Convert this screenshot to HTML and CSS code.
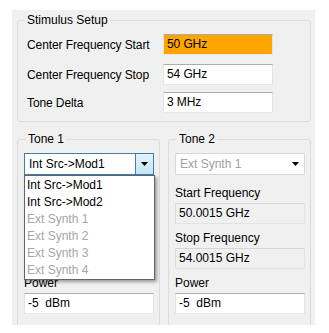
FILE: index.html
```html
<!DOCTYPE html>
<html>
<head>
  <link rel="stylesheet" href="styles.css">
</head>
<body>
  <div class="panel">
    <fieldset class="group stimulus">
      <legend>Stimulus Setup</legend>
      <div class="row first">
        <div class="caption">Center Frequency Start</div>
        <div class="field hot">50 GHz</div>
      </div>
      <div class="row second">
        <div class="caption">Center Frequency Stop</div>
        <div class="field">54 GHz</div>
      </div>
      <div class="row third">
        <div class="caption">Tone Delta</div>
        <div class="field">3 MHz</div>
      </div>
    </fieldset>

    <div class="tones">
      <fieldset class="group tone">
        <legend>Tone 1</legend>
        <div class="tone-body">
          <div class="combo focused">
            <div class="value">Int Src-&gt;Mod1</div>
            <div class="btn">
              <svg width="7" height="4" viewBox="0 0 7 4"><path d="M0 0h7L3.5 4z" fill="#000"/></svg>
            </div>
          </div>
          <!-- start/stop rows sit under the open list -->
          <div class="caption blank"></div>
          <div class="field ro"></div>
          <div class="caption blank"></div>
          <div class="field ro"></div>
          <div class="caption">Power</div>
          <div class="field">-5&nbsp; dBm</div>

          <div class="droplist">
            <div class="item">Int Src-&gt;Mod1</div>
            <div class="item">Int Src-&gt;Mod2</div>
            <div class="item off">Ext Synth 1</div>
            <div class="item off">Ext Synth 2</div>
            <div class="item off">Ext Synth 3</div>
            <div class="item off">Ext Synth 4</div>
          </div>
        </div>
      </fieldset>

      <fieldset class="group tone">
        <legend>Tone 2</legend>
        <div class="tone-body">
          <div class="combo disabled">
            <div class="value">Ext Synth 1</div>
            <div class="btn">
              <svg width="7" height="4" viewBox="0 0 7 4"><path d="M0 0h7L3.5 4z" fill="#000"/></svg>
            </div>
          </div>
          <div class="caption">Start Frequency</div>
          <div class="field ro">50.0015 GHz</div>
          <div class="caption">Stop Frequency</div>
          <div class="field ro">54.0015 GHz</div>
          <div class="caption">Power</div>
          <div class="field">-5&nbsp; dBm</div>
        </div>
      </fieldset>
    </div>
  </div>
</body>
</html>
```

FILE: styles.css
```css
body {
  margin: 0;
  background: #ffffff;
  color: #000000;
  font-family: "Liberation Sans", Arial, sans-serif;
  font-size: 12px;
}

.panel {
  margin: 10px 0 0 12px;
  width: 303px;
  height: 315px;
  box-sizing: border-box;
  padding: 3px 4px 0 5px;
  background: #f0f0f0;
  overflow: hidden;
}

.group {
  margin: 0;
  min-width: 0;
  border: 1px solid #dcdcdc;
  border-radius: 3px;
}

.group legend {
  padding: 0 2px;
  line-height: 14px;
}

/* stimulus block */

.stimulus {
  padding: 0 0 8px 9px;
}

.stimulus legend {
  margin-left: -2px;
}

.row {
  display: flex;
  align-items: center;
  height: 21px;
  letter-spacing: -0.1px;
}

.row.first {
  margin-top: 7px;
}

.row.second {
  margin-top: 9px;
}

.row.third {
  margin-top: 7px;
}

.row .caption {
  width: 136px;
}

.field {
  width: 110px;
  height: 21px;
  box-sizing: border-box;
  padding: 0 3px;
  line-height: 19px;
  background: #ffffff;
  border: 1px solid #e2e3ea;
  border-top-color: #abadb3;
  border-bottom-color: #e3e9ef;
  white-space: nowrap;
}

.field.hot {
  background: #ffa500;
}

.field.ro {
  background: #f0f0f0;
  border-color: #d5d5d5 #e3e3e3 #e3e3e3 #dcdcdc;
}

/* tone blocks */

.tones {
  display: flex;
  gap: 8px;
  margin-top: 10px;
}

.tone {
  flex: 0 0 143px;
  box-sizing: border-box;
  height: 230px;
  padding: 0 5px 0 6px;
}

.tone legend {
  margin-left: 2px;
}

.tone-body {
  position: relative;
  padding-top: 7px;
}

.tone .caption {
  margin-top: 7px;
  line-height: 14px;
}

.tone .caption.blank {
  height: 14px;
}

.combo + .caption {
  margin-top: 11px;
}

.tone .field {
  width: 100%;
  margin-top: 3px;
}

.combo {
  display: flex;
  height: 22px;
  box-sizing: border-box;
  background: #ffffff;
  border: 1px solid #c5c5c5;
}

.combo .value {
  flex: 1;
  padding-left: 4px;
  line-height: 20px;
  white-space: nowrap;
}

.combo .btn {
  width: 17px;
  display: flex;
  align-items: center;
  justify-content: center;
}

.combo.focused {
  border-color: #3c7fb1;
}

.combo.focused .btn {
  border-left: 1px solid #3c7fb1;
  background: linear-gradient(#e5f4fc, #c4e5f6);
}

.combo.disabled {
  border-color: #d9d9d9;
}

.combo.disabled .value {
  color: #a0a0a0;
}

.droplist {
  position: absolute;
  top: 29px;
  left: 0;
  width: 131px;
  box-sizing: border-box;
  padding-top: 1px;
  background: #ffffff;
  border: 1px solid #646464;
  box-shadow: 2px 2px 3px rgba(0, 0, 0, 0.35);
}

.droplist .item {
  padding-left: 2px;
  line-height: 17px;
}

.droplist .item.off {
  color: #a6a6a6;
}
```
